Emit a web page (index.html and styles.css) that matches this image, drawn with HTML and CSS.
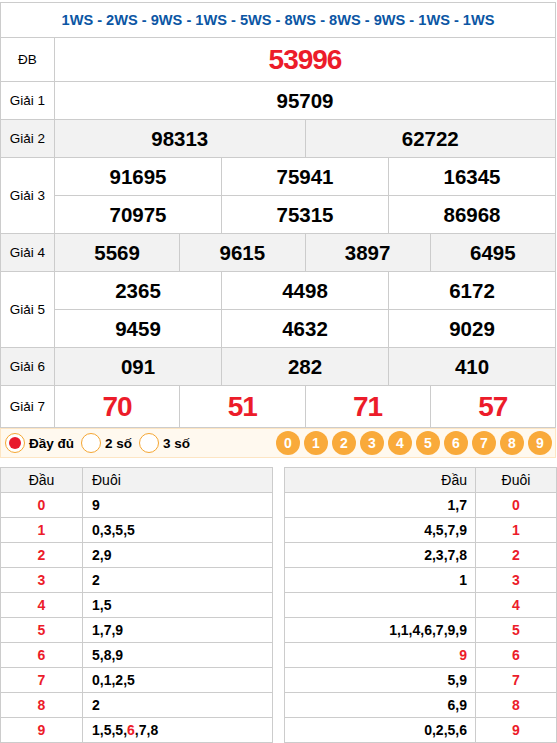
FILE: index.html
```html
<!DOCTYPE html>
<html lang="vi">
<head>
<meta charset="utf-8">
<title>XSMB</title>
<link rel="stylesheet" href="styles.css">
</head>
<body>
<div class="page">
<table class="kq">
<colgroup>
<col class="c-label">
<col><col><col><col><col><col><col><col><col><col><col><col>
</colgroup>
<tbody>
<tr class="r-code"><td colspan="13" class="code">1WS - 2WS - 9WS - 1WS - 5WS - 8WS - 8WS - 9WS - 1WS - 1WS</td></tr>
<tr class="r-db"><td class="lbl">ĐB</td><td colspan="12" class="big">53996</td></tr>
<tr class="r"><td class="lbl">Giải 1</td><td colspan="12" class="num">95709</td></tr>
<tr class="r alt"><td class="lbl">Giải 2</td><td colspan="6" class="num">98313</td><td colspan="6" class="num">62722</td></tr>
<tr class="r"><td class="lbl" rowspan="2">Giải 3</td><td colspan="4" class="num">91695</td><td colspan="4" class="num">75941</td><td colspan="4" class="num">16345</td></tr>
<tr class="r"><td colspan="4" class="num">70975</td><td colspan="4" class="num">75315</td><td colspan="4" class="num">86968</td></tr>
<tr class="r alt"><td class="lbl">Giải 4</td><td colspan="3" class="num">5569</td><td colspan="3" class="num">9615</td><td colspan="3" class="num">3897</td><td colspan="3" class="num">6495</td></tr>
<tr class="r"><td class="lbl" rowspan="2">Giải 5</td><td colspan="4" class="num">2365</td><td colspan="4" class="num">4498</td><td colspan="4" class="num">6172</td></tr>
<tr class="r"><td colspan="4" class="num">9459</td><td colspan="4" class="num">4632</td><td colspan="4" class="num">9029</td></tr>
<tr class="r alt"><td class="lbl">Giải 6</td><td colspan="4" class="num">091</td><td colspan="4" class="num">282</td><td colspan="4" class="num">410</td></tr>
<tr class="r-g7"><td class="lbl">Giải 7</td><td colspan="3" class="big">70</td><td colspan="3" class="big">51</td><td colspan="3" class="big">71</td><td colspan="3" class="big">57</td></tr>
</tbody>
</table>

<div class="opts">
  <div class="radios">
    <label class="radio"><span class="dot on"></span>Đầy đủ</label>
    <label class="radio"><span class="dot"></span>2 số</label>
    <label class="radio"><span class="dot"></span>3 số</label>
  </div>
  <div class="balls">
    <span class="ball">0</span><span class="ball">1</span><span class="ball">2</span><span class="ball">3</span><span class="ball">4</span><span class="ball">5</span><span class="ball">6</span><span class="ball">7</span><span class="ball">8</span><span class="ball">9</span>
  </div>
</div>

<div class="lotos">
<table class="lt left">
<thead><tr><th class="k">Đầu</th><th class="v">Đuôi</th></tr></thead>
<tbody>
<tr><td class="k">0</td><td class="v">9</td></tr>
<tr><td class="k">1</td><td class="v">0,3,5,5</td></tr>
<tr><td class="k">2</td><td class="v">2,9</td></tr>
<tr><td class="k">3</td><td class="v">2</td></tr>
<tr><td class="k">4</td><td class="v">1,5</td></tr>
<tr><td class="k">5</td><td class="v">1,7,9</td></tr>
<tr><td class="k">6</td><td class="v">5,8,9</td></tr>
<tr><td class="k">7</td><td class="v">0,1,2,5</td></tr>
<tr><td class="k">8</td><td class="v">2</td></tr>
<tr><td class="k">9</td><td class="v">1,5,5,<span class="red">6</span>,7,8</td></tr>
</tbody>
</table>
<table class="lt right">
<thead><tr><th class="v">Đầu</th><th class="k">Đuôi</th></tr></thead>
<tbody>
<tr><td class="v">1,7</td><td class="k">0</td></tr>
<tr><td class="v">4,5,7,9</td><td class="k">1</td></tr>
<tr><td class="v">2,3,7,8</td><td class="k">2</td></tr>
<tr><td class="v">1</td><td class="k">3</td></tr>
<tr><td class="v"></td><td class="k">4</td></tr>
<tr><td class="v">1,1,4,6,7,9,9</td><td class="k">5</td></tr>
<tr><td class="v"><span class="red">9</span></td><td class="k">6</td></tr>
<tr><td class="v">5,9</td><td class="k">7</td></tr>
<tr><td class="v">6,9</td><td class="k">8</td></tr>
<tr><td class="v">0,2,5,6</td><td class="k">9</td></tr>
</tbody>
</table>
</div>
</div>
</body>
</html>
```
FILE: styles.css
```css
* { box-sizing: border-box; }
html, body { margin: 0; padding: 0; background: #fff; }
body {
  font-family: "Liberation Sans", Arial, sans-serif;
  color: #000;
}
.page { width: 557px; padding-top: 2px; }

.kq {
  width: 556px;
  border-collapse: collapse;
  table-layout: fixed;
}
.kq .c-label { width: 54px; }
.kq td {
  border: 1px solid #cccccc;
  text-align: center;
  padding: 0;
  vertical-align: middle;
}
.kq .code {
  height: 35px;
  color: #0b56a4;
  font-weight: bold;
  font-size: 14.6px;
}
.kq .r-db td { height: 44px; }
.kq .r td { height: 38px; }
.kq .r-g7 td { height: 42px; }
.kq .alt td { background: #f2f2f2; }
.kq .lbl { font-size: 13.5px; }
.kq .num {
  font-size: 20.5px;
  font-weight: bold;
}
.kq .big {
  font-size: 28px;
  font-weight: bold;
  color: #ec1c2a;
  letter-spacing: -1px;
}

.opts {
  width: 556px;
  height: 30px;
  background: #fff9ef;
  border: 1px solid #fde5c3;
  display: flex;
  align-items: center;
  justify-content: space-between;
  padding: 0 3px 0 4px;
}
.radios { display: flex; align-items: center; gap: 7px; }
.radio {
  display: flex;
  align-items: center;
  gap: 4px;
  font-size: 13.5px;
  font-weight: bold;
}
.dot {
  width: 20px;
  height: 20px;
  border-radius: 50%;
  border: 1px solid #f5a632;
  background: #fff;
  display: flex;
  align-items: center;
  justify-content: center;
}
.dot.on::after {
  content: "";
  width: 12px;
  height: 12px;
  border-radius: 50%;
  background: #e8192c;
}
.balls { display: flex; gap: 4px; }
.ball {
  width: 24px;
  height: 24px;
  border-radius: 50%;
  background: #f9aa3a;
  color: #fff;
  font-weight: bold;
  font-size: 14px;
  display: flex;
  align-items: center;
  justify-content: center;
}

.lotos {
  margin-top: 9px;
  display: flex;
  justify-content: space-between;
  width: 557px;
}
.lt {
  width: 273px;
  border-collapse: collapse;
  table-layout: fixed;
  font-size: 14px;
}
.lt th, .lt td {
  border: 1px solid #cccccc;
  height: 25px;
  padding: 0;
  vertical-align: middle;
}
.lt th {
  background: #f2f2f2;
  font-weight: normal;
}
.lt td { font-weight: bold; }
.lt .k { text-align: center; }
.lt td.k { color: #ec1c2a; }
.lt.left .k { width: 82px; }
.lt.left .v { text-align: left; padding-left: 9px; }
.lt.right .k { width: 81px; }
.lt.right .v { text-align: right; padding-right: 8px; }
.red { color: #ec1c2a; }
```
